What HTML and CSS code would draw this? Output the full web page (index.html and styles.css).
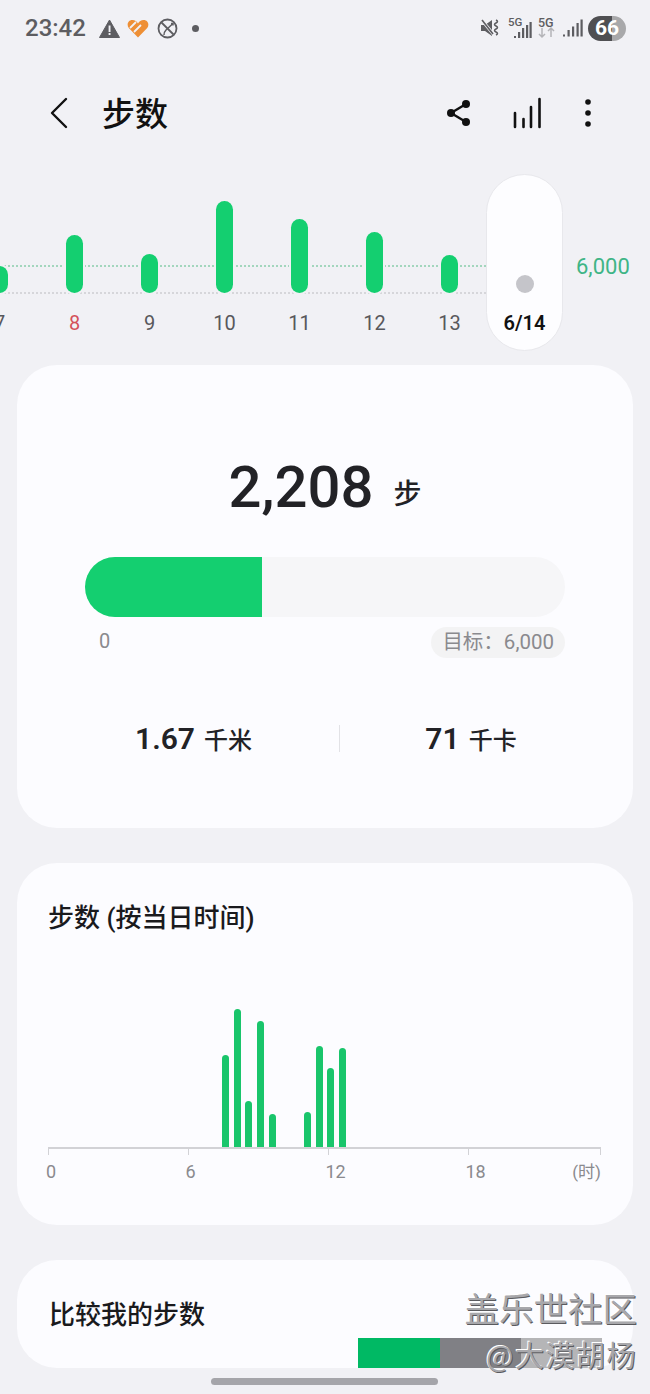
FILE: index.html
```html
<!DOCTYPE html>
<html>
<head>
<meta charset="utf-8">
<title>步数</title>
<link rel="stylesheet" href="styles.css">
</head>
<body>
<div class="page">

<div class="status">
  <span class="time">23:42</span>
  <svg class="st-warn" width="21" height="19" viewBox="0 0 21 19"><path d="M10.5 1 L20.5 18.5 H0.5 Z" fill="#5d5d61" stroke="#5d5d61" stroke-linejoin="round"/><rect x="9.6" y="6.5" width="1.9" height="6.5" fill="#f1f1f5"/><rect x="9.6" y="14" width="1.9" height="2" fill="#f1f1f5"/></svg>
  <svg class="st-heart" width="22" height="19" viewBox="0 0 22 19"><path d="M11 18.5 L1.8 9 C-0.6 6 0.8 1 5.4 1 C8 1 9.8 2.6 11 4.4 C12.2 2.6 14 1 16.6 1 C21.2 1 22.6 6 20.2 9 Z" fill="#ee8f35"/><path d="M3 9 L9 3 M7 13 L14 6" stroke="#f1f1f5" stroke-width="1.8"/></svg>
  <svg class="st-noroam" width="21" height="21" viewBox="0 0 21 21" fill="none" stroke="#5d5d61" stroke-width="1.8"><circle cx="10.5" cy="10.5" r="9"/><path d="M4.5 4.5 L16.5 16.5"/><path d="M14 5.5 H16 V7.5 M16 5.5 L9 12 C7.5 13.5 7 15 7 17" stroke-width="1.5"/></svg>
  <span class="st-dot"></span>
  <span class="status-gap"></span>
  <svg class="st-mute" width="19" height="20" viewBox="0 0 19 20"><path d="M0 7 H4 L11 2 V18 L4 13 H0 Z" fill="#5d5d61"/><path d="M0 1 L13 17" stroke="#f1f1f5" stroke-width="3"/><path d="M1 2 L12 16" stroke="#5d5d61" stroke-width="1.6"/><path d="M15 2 q3 1.500 0 3 q-3 1.500 0 3 q3 1.500 0 3 q-3 1.500 0 3 q3 1.500 0 3" fill="none" stroke="#5d5d61" stroke-width="1.5"/></svg>
  <svg class="st-net" width="24" height="24" viewBox="0 0 24 24"><text x="0" y="10" class="net-label">5G</text><rect x="6" y="20" width="2" height="2" fill="#5d5d61"/><rect x="10" y="16" width="2.200" height="6" fill="#5d5d61"/><rect x="14" y="12" width="2.200" height="10" fill="#5d5d61"/><rect x="18" y="9" width="2.200" height="13" fill="#5d5d61"/><rect x="21.500" y="6" width="2.200" height="16" fill="#5d5d61"/></svg>
  <svg class="st-net2" width="18" height="24" viewBox="0 0 18 24"><text x="0" y="11" class="net-label wide">5G</text><path d="M4 12 V21 M1 18 L4 21 L7 18" fill="none" stroke="#b4b4b8" stroke-width="1.500"/><path d="M13 21 V12 M10 15 L13 12 L16 15" fill="none" stroke="#b4b4b8" stroke-width="1.500"/></svg>
  <svg class="st-signal" width="20" height="18" viewBox="0 0 20 18"><rect x="0" y="15.500" width="2" height="2" fill="#5d5d61"/><rect x="4.500" y="11" width="2.200" height="6.500" fill="#5d5d61"/><rect x="9" y="7.500" width="2.200" height="10" fill="#5d5d61"/><rect x="13.500" y="4" width="2.200" height="13.500" fill="#5d5d61"/><rect x="17.500" y="0.500" width="2.200" height="17" fill="#5d5d61"/></svg>
  <span class="battery"><span class="battery-level">66</span></span>
</div>

<div class="header">
  <svg class="back" width="18" height="32" viewBox="0 0 18 32" fill="none" stroke="#111" stroke-width="2.400" stroke-linecap="round" stroke-linejoin="round"><path d="M16 2 L2 16 L16 30"/></svg>
  <h1 class="title">步数</h1>
  <svg class="act-share" width="26" height="28" viewBox="0 0 26 28"><path d="M20 5 L5 14 L20 23" fill="none" stroke="#111" stroke-width="2.400"/><circle cx="20" cy="5" r="4" fill="#111"/><circle cx="5" cy="14" r="4" fill="#111"/><circle cx="20" cy="23" r="4" fill="#111"/></svg>
  <svg class="act-bars" width="28" height="32" viewBox="0 0 28 32" fill="none" stroke="#111" stroke-width="2.600" stroke-linecap="round"><path d="M2 16 V30 M10.500 22 V30 M18 10 V30 M26.500 2 V30"/></svg>
  <svg class="act-more" width="8" height="30" viewBox="0 0 8 30" fill="#111"><circle cx="4" cy="4" r="2.800"/><circle cx="4" cy="15" r="2.800"/><circle cx="4" cy="26" r="2.800"/></svg>
</div>

<div class="week">
  <div class="goal-line"></div>
  <div class="base-line"></div>
  <div class="day"><div class="plot"><div class="bar" style="height:27px"></div></div><div class="day-label">7</div></div>
  <div class="day"><div class="plot"><div class="bar" style="height:58px"></div></div><div class="day-label red">8</div></div>
  <div class="day"><div class="plot"><div class="bar" style="height:39px"></div></div><div class="day-label">9</div></div>
  <div class="day"><div class="plot"><div class="bar" style="height:92px"></div></div><div class="day-label">10</div></div>
  <div class="day"><div class="plot"><div class="bar" style="height:74px"></div></div><div class="day-label">11</div></div>
  <div class="day"><div class="plot"><div class="bar" style="height:61px"></div></div><div class="day-label">12</div></div>
  <div class="day"><div class="plot"><div class="bar" style="height:38px"></div></div><div class="day-label">13</div></div>
  <div class="day today"><div class="plot"><div class="today-dot"></div></div><div class="day-label">6/14</div></div>
  <div class="goal-value">6,000</div>
</div>

<div class="card summary">
  <div class="total"><span class="total-num">2,208</span><span class="total-unit">步</span></div>
  <div class="progress"><div class="progress-fill" style="width:36.8%"></div></div>
  <div class="progress-scale">
    <span class="scale-zero">0</span>
    <span class="scale-goal">目标：6,000</span>
  </div>
  <div class="stats">
    <div class="stat"><b>1.67</b><span>千米</span></div>
    <div class="stat-divider"></div>
    <div class="stat"><b>71</b><span>千卡</span></div>
  </div>
</div>

<div class="card hourly">
  <h2 class="card-title">步数 (按当日时间)</h2>
  <div class="hour-plot">
    <div class="hbar" style="height:92px"></div>
    <div class="hbar" style="height:138px"></div>
    <div class="hbar" style="height:46px"></div>
    <div class="hbar" style="height:126px"></div>
    <div class="hbar" style="height:33px"></div>
    <div class="hbar after-gap" style="height:35px"></div>
    <div class="hbar" style="height:101px"></div>
    <div class="hbar" style="height:79px"></div>
    <div class="hbar" style="height:99px"></div>
  </div>
  <div class="hour-axis">
    <span>0</span><span>6</span><span>12</span><span>18</span><span class="hour-unit">(时)</span>
  </div>
</div>

<div class="card compare">
  <h2 class="card-title">比较我的步数</h2>
  <div class="compare-bar">
    <div class="cmp-green"></div>
    <div class="cmp-gray"></div>
    <div class="cmp-light"></div>
  </div>
</div>

<div class="home-bar"></div>

<div class="watermark">
  <div class="wm-top">盖乐世社区</div>
  <div class="wm-bottom">@大漠胡杨</div>
</div>

</div>
</body>
</html>
```

FILE: styles.css
```css
* {
  box-sizing: border-box;
}

html, body {
  margin: 0;
  padding: 0;
}

.page {
  position: relative;
  width: 650px;
  height: 1394px;
  overflow: hidden;
  background: #f1f1f5;
  font-family: Roboto, "Noto Sans CJK SC", sans-serif;
}

/* status bar */
.status {
  height: 56px;
  padding: 0 24px 0 25px;
  display: flex;
  align-items: center;
}

.time {
  font-size: 24px;
  font-weight: 500;
  color: #5d5d61;
  width: 74px;
}

.st-heart {
  margin-left: 7px;
}

.st-noroam {
  margin-left: 8px;
}

.st-dot {
  width: 7px;
  height: 7px;
  margin-left: 14px;
  border-radius: 50%;
  background: #5d5d61;
}

.status-gap {
  flex: 1;
}

.st-net {
  margin-left: 8px;
}

.st-net2 {
  margin-left: 6px;
  overflow: visible;
}

.st-signal {
  margin-left: 7px;
}

.net-label {
  font-family: Roboto, sans-serif;
  font-size: 11.500px;
  font-weight: 500;
  fill: #5d5d61;
}

.net-label.wide {
  font-size: 12.500px;
}

.battery {
  width: 38px;
  height: 25px;
  margin-left: 5px;
  border-radius: 13px;
  background: linear-gradient(to right, #4f4f52 63%, #a8a8aa 63%);
  color: #fff;
  font-size: 21px;
  font-weight: 700;
  line-height: 25px;
  text-align: center;
}

/* title row */
.header {
  height: 58px;
  margin-top: 28px;
  padding-left: 50px;
  display: flex;
  align-items: center;
}

.title {
  margin: -3px 0 0 34px;
  flex: 1;
  font-size: 33px;
  font-weight: 500;
  color: #111;
}

.act-share {
  margin-right: -2px;
}

.act-bars {
  margin-left: 43px;
}

.act-more {
  margin-left: 43px;
  margin-right: 58px;
}

/* week chart */
.week {
  position: relative;
  height: 176px;
  margin-top: 33px;
  margin-left: -38px;
  display: flex;
}

.goal-line, .base-line {
  position: absolute;
  left: 38px;
  width: 490px;
  border-top: 2px dotted #a3d6bd;
}

.goal-line {
  top: 90px;
}

.base-line {
  top: 117px;
  border-top-color: #d6d6da;
}

.day {
  position: relative;
  width: 75px;
  display: flex;
  flex-direction: column;
  align-items: center;
}

.plot {
  height: 118px;
  display: flex;
  align-items: flex-end;
}

.bar {
  width: 17px;
  border-radius: 9px;
  background: #14cf70;
  box-shadow: 0 0 0 2px #f1f1f5;
}

.day-label {
  margin-top: 18px;
  font-size: 20px;
  line-height: 24px;
  color: #58585c;
}

.day-label.red {
  color: #d4515a;
}

.today {
  width: 77px;
  height: 177px;
  margin: -1px 0 0 -1px;
  border: 1px solid #e8e8ec;
  border-radius: 39px;
  background: #fdfdff;
}

.today .plot {
  height: 118px;
}

.today-dot {
  width: 18px;
  height: 18px;
  border-radius: 50%;
  background: #c5c5ca;
}

.today .day-label {
  font-size: 20px;
  font-weight: 600;
  color: #111;
}

.goal-value {
  margin: 79px 0 0 13px;
  font-size: 22px;
  line-height: 26px;
  color: #3fb586;
}

/* cards */
.card {
  margin: 0 17px;
  border-radius: 40px;
  background: #fcfcff;
}

.summary {
  height: 463px;
  margin-top: 14px;
  padding: 88px 68px 0;
}

.total {
  height: 68px;
  display: flex;
  justify-content: center;
  align-items: center;
  color: #222226;
}

.total-num {
  font-size: 58px;
  font-weight: 500;
}

.total-unit {
  margin: 10px 0 0 20px;
  font-size: 28px;
  font-weight: 500;
}

.progress {
  height: 60px;
  margin-top: 36px;
  border-radius: 30px;
  background: #f6f6f8;
  overflow: hidden;
}

.progress-fill {
  height: 100%;
  background: #14cf70;
}

.progress-scale {
  margin-top: 10px;
  display: flex;
  justify-content: space-between;
  align-items: center;
  color: #8a8a8e;
  font-size: 20px;
}

.scale-zero {
  margin: -4px 0 0 14px;
}

.scale-goal {
  height: 31px;
  padding: 0 11px;
  border-radius: 16px;
  background: #f3f3f4;
  font-size: 20.500px;
  line-height: 31px;
}

.stats {
  height: 28px;
  margin: 63px -37px 0 -37px;
  display: grid;
  grid-template-columns: 291px 1px 1fr;
  align-items: center;
}

.stat {
  display: flex;
  justify-content: center;
  align-items: center;
  gap: 9px;
  color: #222226;
}

.stat b {
  font-size: 30px;
  font-weight: 600;
}

.stat span {
  font-size: 24px;
  font-weight: 500;
}

.stat-divider {
  height: 27px;
  background: #e2e2e6;
}

.card-title {
  margin: 0;
  font-size: 26px;
  font-weight: 500;
  line-height: 34px;
  color: #1a1a1d;
}

.hourly {
  height: 362px;
  margin-top: 35px;
  padding: 38px 32px 0 31px;
}

.hour-plot {
  height: 147px;
  margin-top: 65px;
  padding-left: 174px;
  display: flex;
  align-items: flex-end;
  gap: 4.7px;
}

.hbar {
  width: 7px;
  border-radius: 3.500px 3.500px 0 0;
  background: #19c56b;
}

.after-gap {
  margin-left: 23.500px;
}

.hour-axis {
  height: 8px;
  display: grid;
  grid-template-columns: 139.500px 140px 140px 1fr auto;
  border-top: 2px solid #d2d2d6;
  border-left: 1px solid #d2d2d6;
  border-right: 1px solid #d2d2d6;
  color: #8a8a8e;
  font-size: 18px;
  line-height: 22px;
  background:
    linear-gradient(#d2d2d6, #d2d2d6) 139px 0 / 1px 100% no-repeat,
    linear-gradient(#d2d2d6, #d2d2d6) 279px 0 / 1px 100% no-repeat,
    linear-gradient(#d2d2d6, #d2d2d6) 419px 0 / 1px 100% no-repeat;
}

.hour-axis span {
  margin: 12px 0 0 -3px;
}

.hour-axis .hour-unit {
  margin-left: 0;
  margin-right: -1px;
  font-size: 17px;
}

.compare {
  height: 108px;
  margin-top: 35px;
  padding: 38px 0 0 32px;
  display: flex;
  flex-direction: column;
}

.compare-bar {
  height: 30px;
  margin-top: 6px;
  margin-right: 31px;
  align-self: flex-end;
  display: flex;
}

.cmp-green {
  width: 82px;
  background: #00b964;
}

.cmp-gray {
  width: 81px;
  background: #808085;
}

.cmp-light {
  width: 81px;
  background: #b5b5b7;
}

.home-bar {
  width: 227px;
  height: 7px;
  margin: 10px 0 0 211px;
  border-radius: 4px;
  background: #a5a5aa;
}

/* watermark sits over the bottom card */
.watermark {
  position: absolute;
  right: 13px;
  top: 1286px;
  text-align: right;
  font-family: "Noto Sans CJK SC", sans-serif;
  color: #a8a8ac;
  text-shadow: 1px 1px 0 #5a5a5e, -1px -1px 0 #fff;
}

.wm-top {
  font-size: 34.500px;
  font-weight: 400;
  line-height: 42px;
}

.wm-bottom {
  font-size: 29px;
  line-height: 36px;
  margin-top: 8px;
  letter-spacing: 1.500px;
}
```
